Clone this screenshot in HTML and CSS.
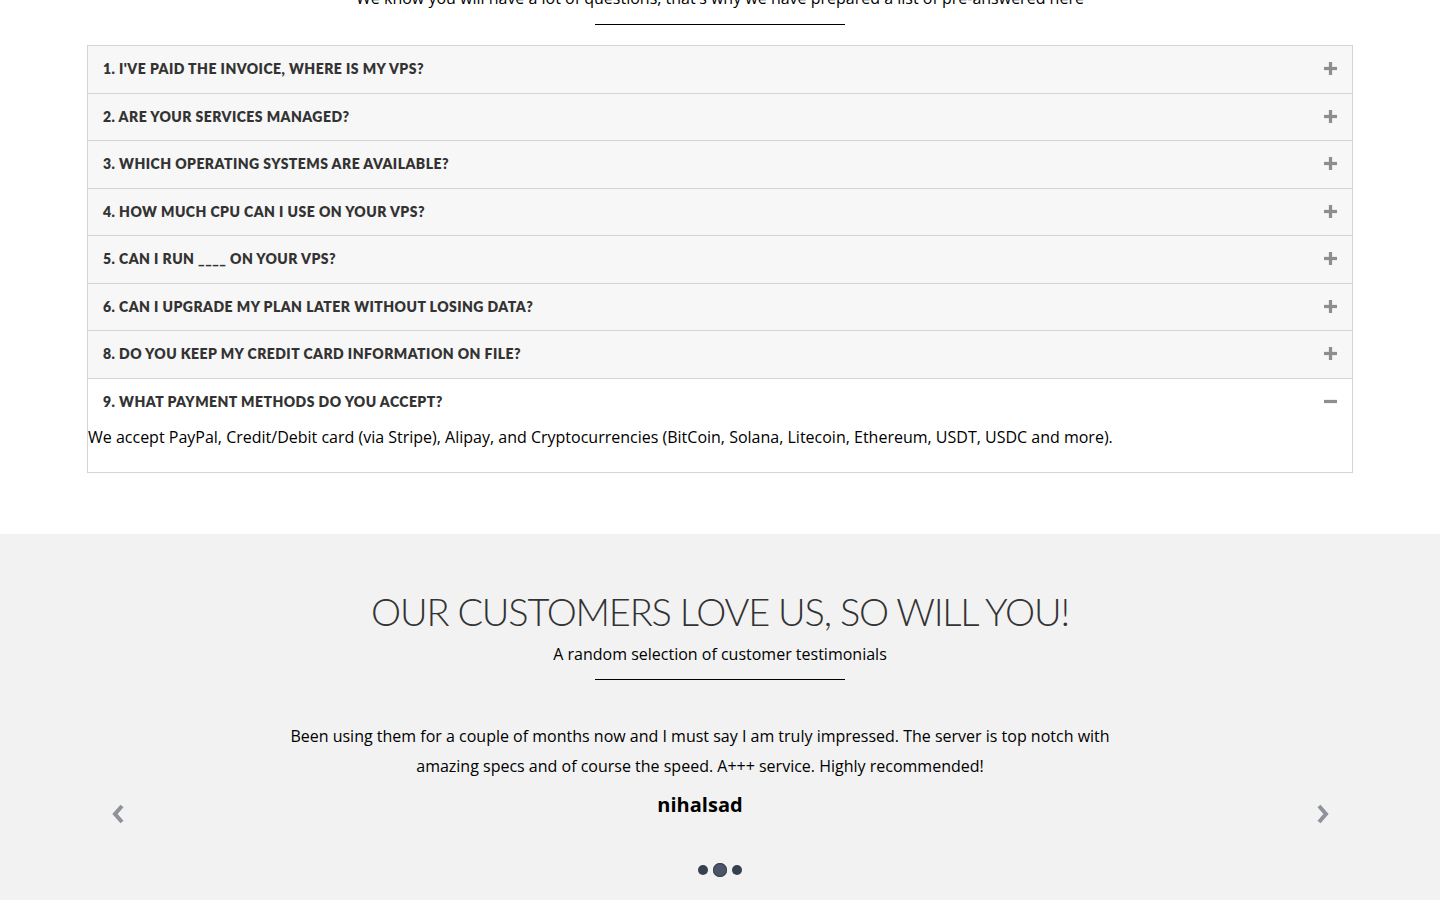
FILE: index.html
```html
<!DOCTYPE html>
<html lang="en">
<head>
    <meta charset="UTF-8">
    <meta name="viewport" content="width=device-width, initial-scale=1.0">
    <title>FAQ &amp; Testimonials</title>
    <link rel="stylesheet" href="styles.css">
</head>
<body>
    <section class="faq">
        <p class="section-lead">We know you will have a lot of questions, that's why we have prepared a list of pre-answered here</p>
        <div class="divider"></div>

        <div class="faq-list">
            <div class="faq-item">
                <div class="faq-title"><span>1. I'VE PAID THE INVOICE, WHERE IS MY VPS?</span>
                    <svg class="faq-icon" viewBox="0 0 12 12"><rect x="0" y="4.5" width="12" height="3"/><rect x="4.5" y="0" width="3" height="12"/></svg>
                </div>
            </div>
            <div class="faq-item">
                <div class="faq-title"><span>2. ARE YOUR SERVICES MANAGED?</span>
                    <svg class="faq-icon" viewBox="0 0 12 12"><rect x="0" y="4.5" width="12" height="3"/><rect x="4.5" y="0" width="3" height="12"/></svg>
                </div>
            </div>
            <div class="faq-item">
                <div class="faq-title"><span>3. WHICH OPERATING SYSTEMS ARE AVAILABLE?</span>
                    <svg class="faq-icon" viewBox="0 0 12 12"><rect x="0" y="4.5" width="12" height="3"/><rect x="4.5" y="0" width="3" height="12"/></svg>
                </div>
            </div>
            <div class="faq-item">
                <div class="faq-title"><span>4. HOW MUCH CPU CAN I USE ON YOUR VPS?</span>
                    <svg class="faq-icon" viewBox="0 0 12 12"><rect x="0" y="4.5" width="12" height="3"/><rect x="4.5" y="0" width="3" height="12"/></svg>
                </div>
            </div>
            <div class="faq-item">
                <div class="faq-title"><span>5. CAN I RUN ____ ON YOUR VPS?</span>
                    <svg class="faq-icon" viewBox="0 0 12 12"><rect x="0" y="4.5" width="12" height="3"/><rect x="4.5" y="0" width="3" height="12"/></svg>
                </div>
            </div>
            <div class="faq-item">
                <div class="faq-title"><span>6. CAN I UPGRADE MY PLAN LATER WITHOUT LOSING DATA?</span>
                    <svg class="faq-icon" viewBox="0 0 12 12"><rect x="0" y="4.5" width="12" height="3"/><rect x="4.5" y="0" width="3" height="12"/></svg>
                </div>
            </div>
            <div class="faq-item">
                <div class="faq-title"><span>8. DO YOU KEEP MY CREDIT CARD INFORMATION ON FILE?</span>
                    <svg class="faq-icon" viewBox="0 0 12 12"><rect x="0" y="4.5" width="12" height="3"/><rect x="4.5" y="0" width="3" height="12"/></svg>
                </div>
            </div>
            <div class="faq-item open">
                <div class="faq-title"><span>9. WHAT PAYMENT METHODS DO YOU ACCEPT?</span>
                    <svg class="faq-icon" viewBox="0 0 12 12"><rect x="0" y="4.5" width="12" height="3"/></svg>
                </div>
                <div class="faq-body">We accept PayPal, Credit/Debit card (via Stripe), Alipay, and Cryptocurrencies (BitCoin, Solana, Litecoin, Ethereum, USDT, USDC and more).</div>
            </div>
        </div>
    </section>

    <section class="testimonials">
        <h2>OUR CUSTOMERS LOVE US, SO WILL YOU!</h2>
        <p class="section-lead">A random selection of customer testimonials</p>
        <div class="divider"></div>

        <div class="carousel">
            <a class="carousel-arrow prev" href="#">
                <svg viewBox="0 0 14 20"><path d="M11 2 L4 10 L11 18" /></svg>
            </a>
            <div class="quote">
                <p>Been using them for a couple of months now and I must say I am truly impressed. The server is top notch with amazing specs and of course the speed. A+++ service. Highly recommended!</p>
                <div class="author">nihalsad</div>
            </div>
            <a class="carousel-arrow next" href="#">
                <svg viewBox="0 0 14 20"><path d="M3 2 L10 10 L3 18" /></svg>
            </a>
        </div>

        <div class="dots">
            <span class="dot"></span>
            <span class="dot active"></span>
            <span class="dot"></span>
        </div>
    </section>
</body>
</html>
```

FILE: styles.css
```css
body {
    margin: 0;
    font-family: 'Open Sans', Arial, sans-serif;
    color: #000;
    background: #fff;
    overflow: hidden;
}
.section-lead {
    margin: 0;
    font-size: 16px;
    line-height: 24px;
    text-align: center;
}
.divider {
    width: 250px;
    height: 1px;
    background: #000;
    margin: 14px auto 0;
}

/* faq accordion */
.faq {
    padding: 0 87px 61px;
}
.faq > .section-lead {
    margin-top: -14px;
}
.faq-list {
    margin-top: 20px;
    border: 1px solid #d4d4d4;
}
.faq-item + .faq-item {
    border-top: 1px solid #d4d4d4;
}
.faq-title {
    display: flex;
    justify-content: space-between;
    align-items: center;
    background: #f7f7f7;
    padding: 14.25px 15px 15.25px 15px;
    font-family: 'Lato', 'Open Sans', sans-serif;
    font-weight: 800;
    font-size: 14px;
    line-height: 17px;
    letter-spacing: 0.45px;
    color: #333;
}
.faq-icon {
    width: 13px;
    height: 13px;
    fill: #8e8e8e;
}
.faq-item.open .faq-title {
    background: #fff;
}
.faq-body {
    background: #fff;
    font-size: 16px;
    line-height: 24px;
    padding: 0 0 23px;
}

/* testimonials */
.testimonials {
    background: #f2f2f2;
    padding: 55px 0 24px;
    text-align: center;
}
.testimonials h2 {
    margin: 0;
    font-family: 'Lato', 'Open Sans', sans-serif;
    font-weight: 300;
    font-size: 38px;
    line-height: 44px;
    letter-spacing: -1.2px;
    color: #333;
}
.testimonials .section-lead {
    margin-top: 9px;
}
.testimonials .divider {
    margin-top: 13px;
}
.carousel {
    position: relative;
    margin-top: 41px;
    padding-right: 40px;
}
.quote {
    max-width: 840px;
    margin: 0 auto;
}
.quote p {
    margin: 0;
    font-size: 16px;
    line-height: 30px;
}
.author {
    margin-top: 10px;
    font-weight: 700;
    font-size: 20px;
    line-height: 28px;
    color: #000;
}
.carousel-arrow {
    position: absolute;
    top: 83px;
    width: 14px;
    height: 20px;
}
.carousel-arrow svg {
    width: 14px;
    height: 20px;
    fill: none;
    stroke: #8f9399;
    stroke-width: 4;
}
.carousel-arrow.prev {
    left: 111px;
}
.carousel-arrow.next {
    right: 110px;
}
.dots {
    display: flex;
    justify-content: center;
    align-items: center;
    gap: 5px;
    margin-top: 44px;
}
.dot {
    width: 10px;
    height: 10px;
    border-radius: 50%;
    background: #36404f;
}
.dot.active {
    width: 14px;
    height: 14px;
    background: #4a5668;
    box-shadow: inset 0 0 0 1px #36404f;
}
```
